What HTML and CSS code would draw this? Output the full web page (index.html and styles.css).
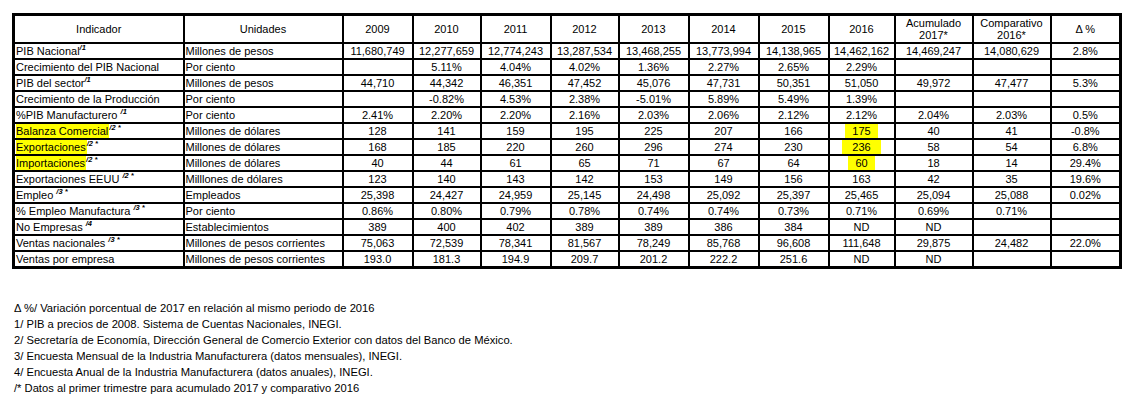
FILE: index.html
```html
<!DOCTYPE html>
<html lang="es">
<head>
<meta charset="utf-8">
<link rel="stylesheet" href="styles.css">
</head>
<body>
<table class="data">
<colgroup>
<col class="c-ind"><col class="c-uni">
<col class="c-y"><col class="c-y2"><col class="c-y"><col class="c-y2"><col class="c-y"><col class="c-y"><col class="c-y"><col class="c-y16">
<col class="c-acc"><col class="c-acc"><col class="c-y">
</colgroup>
<thead>
<tr>
<th>Indicador</th><th>Unidades</th><th>2009</th><th>2010</th><th>2011</th><th>2012</th><th>2013</th><th>2014</th><th>2015</th><th>2016</th><th>Acumulado<br>2017*</th><th>Comparativo<br>2016*</th><th>Δ %</th>
</tr>
</thead>
<tbody>
<tr><td class="l">PIB Nacional<sup>/1</sup></td><td class="l">Millones de pesos</td><td>11,680,749</td><td>12,277,659</td><td>12,774,243</td><td>13,287,534</td><td>13,468,255</td><td>13,773,994</td><td>14,138,965</td><td>14,462,162</td><td>14,469,247</td><td>14,080,629</td><td>2.8%</td></tr>
<tr><td class="l">Crecimiento del PIB Nacional</td><td class="l">Por ciento</td><td></td><td>5.11%</td><td>4.04%</td><td>4.02%</td><td>1.36%</td><td>2.27%</td><td>2.65%</td><td>2.29%</td><td></td><td></td><td></td></tr>
<tr><td class="l">PIB del sector<sup>/1</sup></td><td class="l">Millones de pesos</td><td>44,710</td><td>44,342</td><td>46,351</td><td>47,452</td><td>45,076</td><td>47,731</td><td>50,351</td><td>51,050</td><td>49,972</td><td>47,477</td><td>5.3%</td></tr>
<tr><td class="l">Crecimiento de la Producción</td><td class="l">Por ciento</td><td></td><td>-0.82%</td><td>4.53%</td><td>2.38%</td><td>-5.01%</td><td>5.89%</td><td>5.49%</td><td>1.39%</td><td></td><td></td><td></td></tr>
<tr><td class="l">%PIB Manufacturero <sup>/1</sup></td><td class="l">Por ciento</td><td>2.41%</td><td>2.20%</td><td>2.20%</td><td>2.16%</td><td>2.03%</td><td>2.06%</td><td>2.12%</td><td>2.12%</td><td>2.04%</td><td>2.03%</td><td>0.5%</td></tr>
<tr><td class="l"><span class="hl">Balanza Comercial </span><sup>/2 *</sup></td><td class="l">Millones de dólares</td><td>128</td><td>141</td><td>159</td><td>195</td><td>225</td><td>207</td><td>166</td><td><span class="hlv">175</span></td><td>40</td><td>41</td><td>-0.8%</td></tr>
<tr><td class="l"><span class="hl">Exportaciones </span><sup>/2 *</sup></td><td class="l">Millones de dólares</td><td>168</td><td>185</td><td>220</td><td>260</td><td>296</td><td>274</td><td>230</td><td><span class="hlv wide">236</span></td><td>58</td><td>54</td><td>6.8%</td></tr>
<tr><td class="l"><span class="hl">Importaciones </span><sup>/2 *</sup></td><td class="l">Millones de dólares</td><td>40</td><td>44</td><td>61</td><td>65</td><td>71</td><td>67</td><td>64</td><td><span class="hlv">60</span></td><td>18</td><td>14</td><td>29.4%</td></tr>
<tr><td class="l">Exportaciones EEUU <sup>/2 *</sup></td><td class="l">Milllones de dólares</td><td>123</td><td>140</td><td>143</td><td>142</td><td>153</td><td>149</td><td>156</td><td>163</td><td>42</td><td>35</td><td>19.6%</td></tr>
<tr><td class="l">Empleo <sup>/3 *</sup></td><td class="l">Empleados</td><td>25,398</td><td>24,427</td><td>24,959</td><td>25,145</td><td>24,498</td><td>25,092</td><td>25,397</td><td>25,465</td><td>25,094</td><td>25,088</td><td>0.02%</td></tr>
<tr><td class="l">% Empleo Manufactura <sup>/3 *</sup></td><td class="l">Por ciento</td><td>0.86%</td><td>0.80%</td><td>0.79%</td><td>0.78%</td><td>0.74%</td><td>0.74%</td><td>0.73%</td><td>0.71%</td><td>0.69%</td><td>0.71%</td><td></td></tr>
<tr><td class="l">No Empresas <sup>/4</sup></td><td class="l">Establecimientos</td><td>389</td><td>400</td><td>402</td><td>389</td><td>389</td><td>386</td><td>384</td><td>ND</td><td>ND</td><td></td><td></td></tr>
<tr><td class="l">Ventas nacionales <sup>/3 *</sup></td><td class="l">Millones de pesos corrientes</td><td>75,063</td><td>72,539</td><td>78,341</td><td>81,567</td><td>78,249</td><td>85,768</td><td>96,608</td><td>111,648</td><td>29,875</td><td>24,482</td><td>22.0%</td></tr>
<tr><td class="l">Ventas por empresa</td><td class="l">Millones de pesos corrientes</td><td>193.0</td><td>181.3</td><td>194.9</td><td>209.7</td><td>201.2</td><td>222.2</td><td>251.6</td><td>ND</td><td>ND</td><td></td><td></td></tr>
</tbody>
</table>
<div class="notes">
<p>Δ %/ Variación porcentual de 2017 en relación al mismo periodo de 2016</p>
<p>1/ PIB a precios de 2008. Sistema de Cuentas Nacionales, INEGI.</p>
<p>2/ Secretaría de Economía, Dirección General de Comercio Exterior con datos del Banco de México.</p>
<p>3/ Encuesta Mensual de la Industria Manufacturera (datos mensuales), INEGI.</p>
<p>4/ Encuesta Anual de la Industria Manufacturera (datos anuales), INEGI.</p>
<p>/* Datos al primer trimestre para acumulado 2017 y comparativo 2016</p>
</div>
</body>
</html>
```
FILE: styles.css
```css
html, body {
  margin: 0;
  padding: 0;
  background: #ffffff;
}
body {
  padding: 13px 0 0 12px;
  font-family: "Liberation Sans", Arial, sans-serif;
  font-size: 11px;
  color: #000000;
}
.data {
  border-collapse: collapse;
  table-layout: fixed;
  width: 1108px;
  border: 3px solid #000;
}
.c-ind { width: 170px; }
.c-uni { width: 159px; }
.c-y { width: 70px; }
.c-y2 { width: 68px; }
.c-y16 { width: 66px; }
.c-acc { width: 78px; }
.data th, .data td {
  border: 2px solid #000;
  padding: 0 2px;
  text-align: center;
  white-space: nowrap;
  overflow: hidden;
}
.data th {
  font-weight: normal;
  height: 26px;
  line-height: 12px;
  vertical-align: middle;
}
.data td {
  height: 14px;
  line-height: 14px;
  vertical-align: bottom;
}
.data td.l {
  text-align: left;
  padding-left: 1px;
}
sup {
  font-size: 7.5px;
  line-height: 0;
  vertical-align: 5px;
  font-style: italic;
  font-weight: bold;
}
.hl {
  background: #ffff00;
  display: inline-block;
  line-height: 14px;
  padding-right: 1px;
}
.hlv {
  background: #ffff00;
  display: inline-block;
  line-height: 14px;
  padding: 0 7px;
}
.hlv.wide { padding: 0 10px; }
.notes {
  margin-top: 31px;
  padding-left: 2px;
  font-size: 11.2px;
}
.notes p {
  margin: 0;
  line-height: 16px;
}
```
